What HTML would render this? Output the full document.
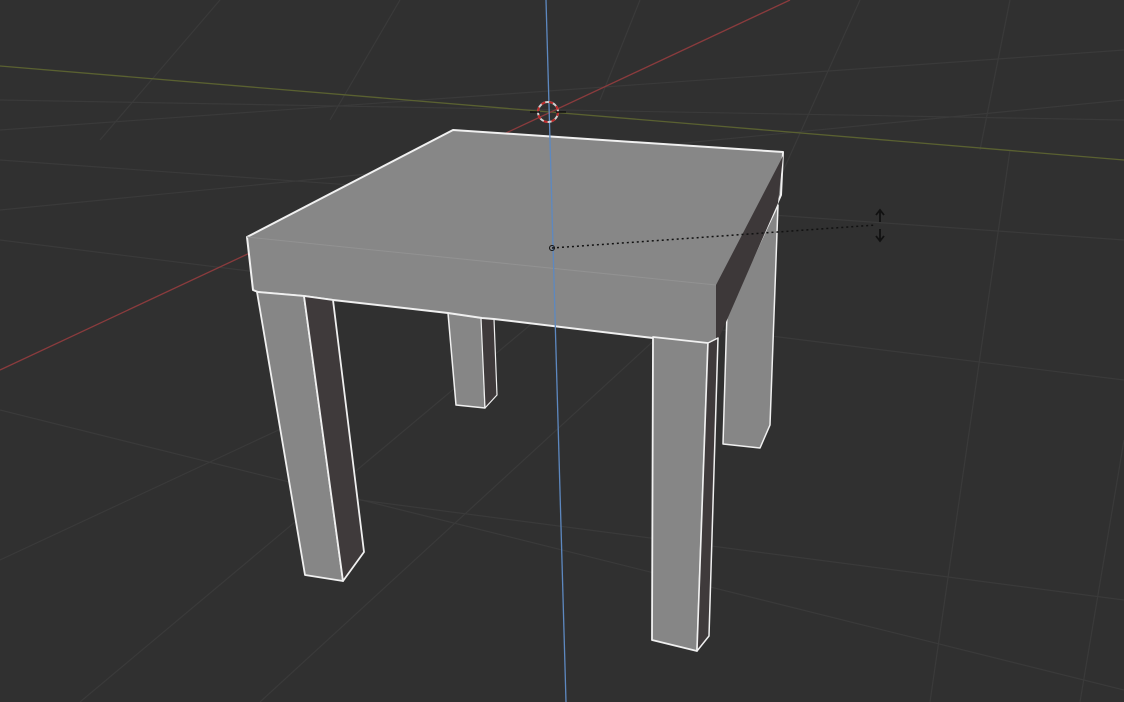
<!DOCTYPE html>
<html><head><style>html,body{margin:0;padding:0;background:#303030;overflow:hidden}svg{display:block}</style></head>
<body>
<svg width="1124" height="702" viewBox="0 0 1124 702" xmlns="http://www.w3.org/2000/svg">
<rect width="1124" height="702" fill="#303030"/>
<g stroke="#3a3a3a" stroke-width="1.2" fill="none">
<line x1="0" y1="130" x2="1124" y2="50"/>
<line x1="0" y1="210" x2="1124" y2="100"/>
<line x1="0" y1="410" x2="1124" y2="690"/>
<line x1="0" y1="240" x2="1124" y2="380"/>
<line x1="0" y1="160" x2="1124" y2="240"/>
<line x1="0" y1="100" x2="1124" y2="120"/>
<line x1="80" y1="702" x2="560" y2="300"/>
<line x1="260" y1="702" x2="720" y2="280"/>
<line x1="930" y1="702" x2="1010" y2="150"/>
<line x1="1080" y1="702" x2="1124" y2="440"/>
<line x1="860" y1="0" x2="770" y2="200"/>
<line x1="640" y1="0" x2="600" y2="100"/>
<line x1="400" y1="0" x2="330" y2="120"/>
<line x1="220" y1="0" x2="100" y2="140"/>
<line x1="1010" y1="0" x2="980" y2="150"/>
<line x1="0" y1="560" x2="300" y2="420"/>
<line x1="360" y1="500" x2="1124" y2="600"/>
</g>
<line x1="0" y1="66" x2="1124" y2="160" stroke="#5a6131" stroke-width="1.3"/>
<line x1="0" y1="370" x2="790" y2="0" stroke="#8a3b3d" stroke-width="1.3"/>
<g stroke-linejoin="round">
<polygon points="727,312 778,205 770,425 760,448 723,444" fill="#868686" stroke="#f0f0f0" stroke-width="1.5"/>
<polygon points="448,313 482,318 485,408 456,405" fill="#868686" stroke="#f0f0f0" stroke-width="1.5"/>
<polygon points="481,318 494,319 497,395 485,408" fill="#3f3a3b" stroke="#f0f0f0" stroke-width="1.2"/>
<polygon points="453,130 783,152 781,195 714,345 653,338 494,319 482,318 448,313 333,300 304,296 258,292 253,290 247,237" fill="#878787" stroke="#f0f0f0" stroke-width="2"/>
<polygon points="783,156 778,203 716,345 716,285" fill="#3d3839"/>
<polygon points="257,292 304,296 343,581 305,575" fill="#868686" stroke="#f0f0f0" stroke-width="1.8"/>
<polygon points="304,296 333,300 364,552 343,581" fill="#3f3a3b" stroke="#f0f0f0" stroke-width="1.8"/>
<polygon points="653,337 708,343 697,651 652,640" fill="#868686" stroke="#f0f0f0" stroke-width="1.8"/>
<polygon points="708,343 718,338 709,636 697,651" fill="#3f3a3b" stroke="#f0f0f0" stroke-width="1.5"/>
<line x1="247" y1="237" x2="716" y2="285" stroke="#929292" stroke-width="1"/>
</g>
<line x1="546" y1="0" x2="566" y2="702" stroke="#5d88c0" stroke-width="1.3"/>
<circle cx="548" cy="112" r="10" fill="none" stroke="#d0d0d0" stroke-width="2"/>
<circle cx="548" cy="112" r="10" fill="none" stroke="#c02a2a" stroke-width="2" stroke-dasharray="4 4"/>
<line x1="530" y1="112" x2="540" y2="112" stroke="#111" stroke-width="1.5"/>
<line x1="556" y1="112" x2="566" y2="112" stroke="#111" stroke-width="1.5"/>
<line x1="552" y1="248" x2="876" y2="225" stroke="#111" stroke-width="1.5" stroke-dasharray="2 3"/>
<circle cx="552" cy="248" r="2.5" fill="none" stroke="#111" stroke-width="1"/>
<path d="M880 222 V211 M876 215 L880 210 L884 215 M880 229 V240 M876 236 L880 241 L884 236" stroke="#111" stroke-width="1.8" fill="none"/>
</svg>
</body></html>
